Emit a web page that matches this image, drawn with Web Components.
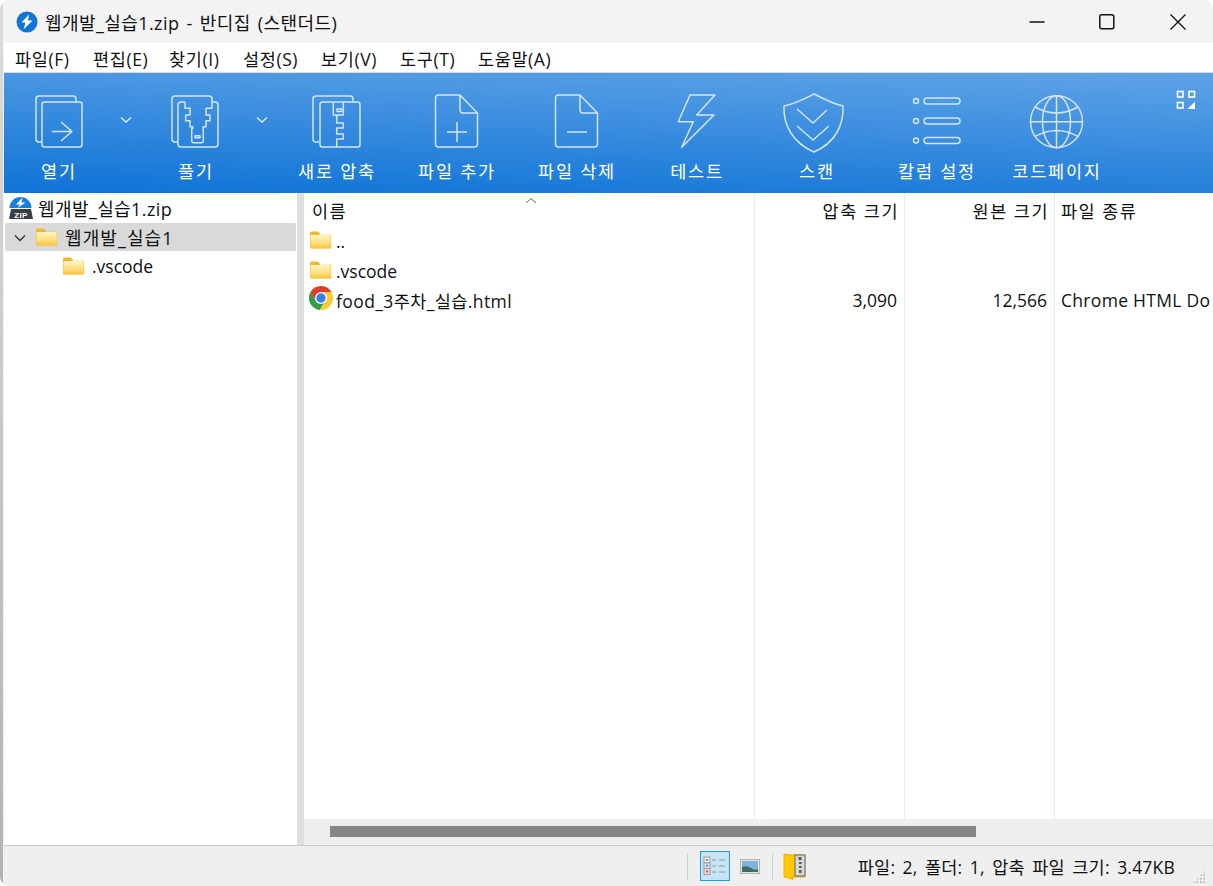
<!DOCTYPE html>
<html lang="ko"><head><meta charset="utf-8"><title>반디집</title>
<style>
html,body{margin:0;height:100%;background:#fff;overflow:hidden}
body{font-family:"Open Sans","Noto Sans CJK KR",sans-serif;color:#111}
</style></head><body>
<bz-window>
  <bz-titlebar slot="title">웹개발_실습1.zip - 반디집 (스탠더드)</bz-titlebar>
  <bz-menubar>
    <bz-menu w="78">파일(F)</bz-menu><bz-menu w="76">편집(E)</bz-menu><bz-menu w="74">찾기(I)</bz-menu><bz-menu w="78">설정(S)</bz-menu><bz-menu w="79">보기(V)</bz-menu><bz-menu w="78">도구(T)</bz-menu><bz-menu w="80">도움말(A)</bz-menu>
  </bz-menubar>
  <bz-toolbar>
    <bz-tool icon="open" w="108">열기</bz-tool><bz-drop l="6" r="2"></bz-drop>
    <bz-tool icon="extract" w="118">풀기</bz-tool><bz-drop l="0" r="6"></bz-drop>
    <bz-tool icon="newzip" w="120">새로 압축</bz-tool>
    <bz-tool icon="add" w="120">파일 추가</bz-tool>
    <bz-tool icon="del" w="120">파일 삭제</bz-tool>
    <bz-tool icon="test" w="120">테스트</bz-tool>
    <bz-tool icon="scan" w="120">스캔</bz-tool>
    <bz-tool icon="cols" w="120">칼럼 설정</bz-tool>
    <bz-tool icon="globe" w="120">코드페이지</bz-tool>
    <bz-icon name="grid" style="width:20px;height:20px;margin:17px 0 0 60px;flex:none"></bz-icon>
  </bz-toolbar>
  <bz-main>
    <bz-tree>
      <bz-tree-row icon="zip" indent="4">웹개발_실습1.zip</bz-tree-row>
      <bz-tree-row icon="folder" indent="31" open selected style="letter-spacing:1.100px">웹개발_실습1</bz-tree-row>
      <bz-tree-row icon="folder" indent="58" style="font-size:17.500px;letter-spacing:0;padding-top:2px">.vscode</bz-tree-row>
    </bz-tree>
    <bz-list>
      <bz-row icon="folder" style="height:30px">..</bz-row>
      <bz-row icon="folder" nm="0">.vscode</bz-row>
      <bz-row icon="chrome" nm=".4" packed="3,090" size="12,566" kind="Chrome HTML Do" style="height:29px">food_3주차_실습.html</bz-row>
    </bz-list>
  </bz-main>
  <bz-status>파일: 2, 폴더: 1, 압축 파일 크기: 3.47KB</bz-status>
</bz-window>
<script>
const folder=`<defs><linearGradient id="fg" x1="0" y1="0" x2="0" y2="1"><stop offset="0" stop-color="#fff3c0"/><stop offset=".6" stop-color="#ffdf80"/><stop offset="1" stop-color="#fcc437"/></linearGradient></defs>
<path d="M0 2.200Q0 .5 1.600 .5H8l2.200 2.200V6H0Z" fill="#f6b52a"/><path d="M0 4H22.200V18.600H1.400Q0 18.600 0 17.200Z" fill="#f6bc38"/><rect x=".5" y="4.300" width="21.200" height="13.800" rx=".6" fill="url(#fg)"/>`;
const docPath=`<path d="M51.500 21V52a3 3 0 0 1-3 3H12.500a3 3 0 0 1-3-3V6a3 3 0 0 1 3-3H34L51.500 21H37a3 3 0 0 1-3-3V3"/>`;
const ICONS={
 open:[60,60,`<g class="s"><path d="M14 50H11a3 3 0 0 1-3-3V7a3 3 0 0 1 3-3H45a3 3 0 0 1 3 3v3"/><rect x="14" y="10" width="40" height="45" rx="2.500"/><path d="M24 39.500H44M33 30L44 39.500L33 49"/></g>`],
 extract:[60,60,`<g class="s"><path d="M13 50H10a3 3 0 0 1-3-3V7a3 3 0 0 1 3-3H44a3 3 0 0 1 3 3v3"/><path d="M20 10H16a3 3 0 0 0-3 3V52a3 3 0 0 0 3 3H50a3 3 0 0 0 3-3V13a3 3 0 0 0-3-3H47"/><path d="M20 10V16.300H25V23H20.700V28.700H25V34.700H28M47 10V16.300H41V23H45V28.700H41V34.700H38"/><path d="M28 34.700V36.300H26.700V48.700Q26.700 50.700 28.700 50.700H36.300Q38.300 50.700 38.300 48.700V36.300H38V34.700"/><rect x="30" y="43.700" width="5" height="2"/></g>`],
 newzip:[60,60,`<g class="s"><path d="M13 50H10a3 3 0 0 1-3-3V7a3 3 0 0 1 3-3H44a3 3 0 0 1 3 3v3"/><rect x="14" y="10" width="40" height="45" rx="2.500"/><path d="M27.300 10V23H37.300V10"/><rect x="31" y="17" width="4.500" height="2.500"/><path d="M30.700 23V31H37.300V36H30.700V42H37.300V47H30.700V55"/></g>`],
 add:[60,60,`<g class="s">${docPath}<path d="M21 40H41M31 30V50"/></g>`],
 del:[60,60,`<g class="s">${docPath}<path d="M21 40H41"/></g>`],
 test:[60,60,`<g class="s"><path d="M24 3H49L30.700 23H48L15.700 55.300L27.300 29.700H12.300Z"/></g>`],
 scan:[60,60,`<g class="s"><path d="M28 2C36 6 47 12 57 14C58 33 49 51 28 60C7 51-3 33-2 14C9 12 20 6 28 2Z"/><path d="M11 17L27 31L41 18M11 34L27 48L43 34"/></g>`],
 cols:[60,60,`<g class="s"><circle cx="10" cy="9" r="2.500"/><circle cx="10" cy="29" r="2.500"/><circle cx="10" cy="48.500" r="2.500"/><rect x="18" y="6" width="36" height="6" rx="3"/><rect x="18" y="26" width="36" height="6" rx="3"/><rect x="18" y="45.500" width="36" height="6" rx="3"/></g>`],
 globe:[60,60,`<g class="s"><circle cx="30.500" cy="29.700" r="26"/><ellipse cx="30.500" cy="29.700" rx="14" ry="26"/><path d="M30.500 3.700V55.700M4.500 29.700H56.500M9 15Q30.500 27 52 15M9 44.400Q30.500 32.400 52 44.400"/></g>`],
 grid:[20,20,`<g fill="none" stroke="#fff" stroke-width="1.600"><rect x="1.500" y="1.500" width="5.500" height="5.500"/><rect x="13" y="1.500" width="5.500" height="5.500"/><rect x="1.500" y="12.500" width="5.500" height="5.500"/></g><path d="M11.500 19H19V11.500Z" fill="#fff"/>`],
 chev:[16,16,`<path d="M3 5.500L8 10L13 5.500" fill="none" stroke="#dcebfa" stroke-width="1.500"/>`],
 folder:[23,19,folder],
 zip:[26,26,`<path d="M1.500 13a11 11 0 0 1 22 0Z" fill="#1a7fdc"/><path d="M14.500 2.500L8 9.500H12L9.500 13L17.500 7.500H13.500Z" fill="#fff"/><path d="M3 14H23L25 24H1Z" fill="#3a3f46"/><text x="13" y="22.500" text-anchor="middle" font-family="Liberation Sans" font-weight="700" font-size="8" fill="#fff">ZIP</text>`],
 chrome:[24,24,`<circle cx="12" cy="12" r="12" fill="#fcc934"/><path d="M12 0A12 12 0 0 0 1.600 6L6.800 15L12 6H22.400A12 12 0 0 0 12 0Z" fill="#e33b2e"/><path d="M1.600 6A12 12 0 0 0 10.500 23.900L16 15L6.800 15Z" fill="#2f9e4f" /><circle cx="12" cy="12" r="6" fill="#fff"/><circle cx="12" cy="12" r="4.700" fill="#3b7de8"/>`],
 details:[27,27,`<rect x="3" y="5" width="6" height="6" fill="#f4f4f4" stroke="#9a9a9a"/><rect x="3" y="11" width="6" height="5.500" fill="#dbe6ff" stroke="#9a9a9a"/><rect x="3" y="16.500" width="6" height="6" fill="#f7dada" stroke="#9a9a9a"/><rect x="5" y="7" width="2" height="2" fill="#888"/><rect x="5" y="12.700" width="2" height="2" fill="#6c8ef0"/><rect x="5" y="18.500" width="2" height="2" fill="#e04848"/><path d="M11 8H15M18 8H24M11 14H15M18 14H24M11 20H15M18 20H24" stroke="#999" stroke-width="1"/>`],
 image:[20,15,`<rect x=".5" y=".5" width="19" height="14" fill="#e4e4e4" stroke="#b4b4b4"/><rect x="2" y="2" width="16" height="11" fill="#7fb2dc"/><path d="M2 8Q7 6 11 9T18 10V13H2Z" fill="#3f6d5c"/>`],
 zipfolder:[25,27,`<path d="M1 1H18V24H1Z" fill="#ffd400"/><path d="M18 2H22V24H10V26.500L1 24V1L10 3Z" fill="#ffc800" stroke="#f0a800" stroke-width=".8"/><rect x="12" y="2" width="10" height="21" fill="#d8d8d8" stroke="#666"/><path d="M15.500 4H18.500V7H15.500ZM16 9H18.500V11H16ZM16 13H18.500V15H16ZM16 17H18.500V20H16Z" fill="#555"/>`]
};
let uid=0;
class BzIcon extends HTMLElement{
  static get observedAttributes(){return["name"]}
  constructor(){super();this.attachShadow({mode:"open"}).innerHTML=`<style>:host{display:inline-block;line-height:0}svg{width:100%;height:100%;overflow:visible;display:block}.s{fill:none;stroke:#d3e5f8;stroke-width:1.500;stroke-linejoin:round}</style><div style="width:100%;height:100%"></div>`}
  attributeChangedCallback(a,o,n){
    const [w,h,b]=ICONS[n];const id="g"+(++uid);
    this.shadowRoot.querySelector("div").innerHTML=`<svg viewBox="0 0 ${w} ${h}">${b.replace(/"fg"/g,`"${id}"`).replace(/#fg/g,"#"+id)}</svg>`;
  }
}
customElements.define("bz-icon",BzIcon);
const define=(n,css,html,init)=>customElements.define(n,class extends HTMLElement{
  constructor(){super();this.attachShadow({mode:"open"}).innerHTML=`<style>${css}</style>${html}`}
  connectedCallback(){init&&init.call(this,this.shadowRoot)}
});
define("bz-window",`:host{display:flex;flex-direction:column;height:886px;box-sizing:border-box;padding-left:4px;border-radius:9px 9px 0 9px;overflow:hidden;background:linear-gradient(#dcdcdc,#b2b2b2) 0 0/3px 100% no-repeat,#f2f2f2}`,`<slot name="title"></slot><slot></slot>`);
define("bz-titlebar",`:host{display:flex;align-items:center;height:43px;flex:none;background:#f3f3f3;font-size:18px;color:#111}
.app{width:22px;height:22px;margin:0 7px 0 12px;flex:none}.t{flex:1;word-spacing:2px;letter-spacing:.42px;white-space:nowrap}.b{display:flex}.b svg{width:46px;height:16px;display:block}`,
`<svg class="app" viewBox="0 0 22 22"><circle cx="11" cy="11" r="10.500" fill="#1175d8"/><path d="M13 3.500L5.500 11.500H9.500L7.500 18.500L16.500 9.500H12Z" fill="#fff"/></svg><span class="t"><slot></slot></span>
<span class="b"><svg viewBox="0 0 46 16"><path d="M15.500 8H30.500" stroke="#111" stroke-width="1.300"/></svg><svg viewBox="0 0 46 16" style="margin-left:24px"><rect x="15.800" y=".8" width="14" height="14" rx="2" fill="none" stroke="#111" stroke-width="1.500"/></svg><svg viewBox="0 0 46 16" style="margin:0 12px 0 25px"><path d="M15.500 .5L30.500 15.500M30.500 .5L15.500 15.500" stroke="#111" stroke-width="1.300"/></svg></span>`);
define("bz-menubar",`:host{display:flex;height:30px;box-sizing:border-box;flex:none;padding:1px 0 0 11px;background:#fff;border-bottom:1px solid #dcdcdc;align-items:center;font-size:17.500px;letter-spacing:.6px}`,`<slot></slot>`);
define("bz-menu",`:host{display:block;white-space:nowrap}`,`<slot></slot>`,function(){this.style.width=this.getAttribute("w")+"px"});
define("bz-toolbar",`:host{display:flex;height:120px;flex:none;background:linear-gradient(182deg,#5fa3e6,#0f73d6);color:#fff}`,`<slot></slot>`);
define("bz-tool",`:host{display:flex;flex-direction:column;align-items:center;flex:none;padding-top:19px;box-sizing:border-box;font-size:17.500px;letter-spacing:1.800px;white-space:nowrap}
bz-icon{width:60px;height:60px}.l{margin-top:7px;line-height:24px;padding-left:2px}`,`<bz-icon></bz-icon><span class="l"><slot></slot></span>`,function(r){
  this.style.width=this.getAttribute("w")+"px";
  r.querySelector("bz-icon").setAttribute("name",this.getAttribute("icon"));
});
define("bz-drop",`:host{display:block;width:16px;flex:none;padding-top:39px}bz-icon{width:16px;height:16px;display:block}`,`<bz-icon name="chev"></bz-icon>`,function(){
  this.style.marginLeft=this.getAttribute("l")+"px";this.style.marginRight=this.getAttribute("r")+"px";
});
define("bz-main",`:host{display:flex;flex:1;min-height:0;background:#fff}`,`<slot></slot>`);
define("bz-tree",`:host{display:block;flex:none;padding:1px 1px 0 1px;box-sizing:border-box;border-right:7px solid #dedede;width:300px}`,`<slot></slot>`);
define("bz-tree-row",`:host{display:flex;align-items:center;height:28.500px;box-sizing:border-box;font-size:18px;letter-spacing:.4px;border-radius:2px;position:relative;white-space:nowrap}
:host([selected]){background:#d9d9d9}.c{position:absolute;left:7px;top:7px;width:16px;height:16px}.c[hidden]{display:none}.i{width:22px;height:18px;margin:0 7px 0 0;flex:none}.i.z{width:26px;height:26px;margin:0 4px 0 -1px}`,
`<svg class="c" viewBox="0 0 16 16" hidden><path d="M3 5.500L8 10.500L13 5.500" fill="none" stroke="#333" stroke-width="1.300"/></svg><bz-icon class="i"></bz-icon><span><slot></slot></span>`,function(r){
  this.style.paddingLeft=this.getAttribute("indent")+"px";
  const i=r.querySelector(".i");i.setAttribute("name",this.getAttribute("icon"));
  if(this.hasAttribute("open"))r.querySelector(".c").removeAttribute("hidden");
  if(this.getAttribute("icon")=="zip")i.classList.add("z");
});
define("bz-list",`:host{display:flex;flex-direction:column;flex:1;min-width:0;overflow:hidden}
.body{flex:1;min-height:0;background:linear-gradient(#e4eef8,#e4eef8) 450px 0/1px 100% no-repeat,linear-gradient(#e4eef8,#e4eef8) 600px 0/1px 100% no-repeat,linear-gradient(#e4eef8,#e4eef8) 750px 0/1px 100% no-repeat}
.h{display:grid;grid-template-columns:450px 150px 150px 1fr;height:33px;box-sizing:border-box;padding-top:2px;align-items:center;font-size:17.500px;position:relative;letter-spacing:1.500px}
.h span:nth-child(1){padding-left:8px}.h span:nth-child(2),.h span:nth-child(3){text-align:right;padding-right:5px}.h span:nth-child(4){padding-left:7px}
.sort{position:absolute;left:221px;top:4px;width:12px;height:7px}
.bar{height:26px;flex:none;background:#efefef;padding:7px 0 8px 26px;box-sizing:border-box}.th{display:block;width:646px;height:11px;background:#868686}`,
`<div class="body"><div class="h"><span>이름</span><span>압축 크기</span><span>원본 크기</span><span>파일 종류</span><svg class="sort" viewBox="0 0 12 7"><path d="M1 6L6 1.500L11 6" fill="none" stroke="#666"/></svg></div><slot></slot></div><div class="bar"><span class="th"></span></div>`);
define("bz-row",`:host{display:grid;grid-template-columns:450px 150px 150px 1fr;height:29.500px;align-items:center;font-size:17.500px;white-space:nowrap;overflow:hidden}
.n{display:flex;align-items:center;padding-left:6px}.i{width:22px;height:18px;margin:-2px 4px 0 0}.i.ch{width:24px;height:24px;margin:-4px 3px 0 -1px}
.r{text-align:right;padding-right:7px}.k{padding-left:7px;overflow:hidden;letter-spacing:.3px}`,
`<div class="n"><bz-icon class="i"></bz-icon><span><slot></slot></span></div><div class="r p"></div><div class="r s"></div><div class="k"></div>`,function(r){
  const i=r.querySelector(".i");i.setAttribute("name",this.getAttribute("icon"));
  if(this.hasAttribute("nm"))r.querySelector(".n").style.letterSpacing=this.getAttribute("nm")+"px";
  r.querySelector(".p").textContent=this.getAttribute("packed")||"";
  r.querySelector(".s").textContent=this.getAttribute("size")||"";
  r.querySelector(".k").textContent=this.getAttribute("kind")||"";
  if(this.getAttribute("icon")=="chrome")i.classList.add("ch");
});
define("bz-status",`:host{display:flex;height:41px;flex:none;box-sizing:border-box;background:#efefef;border-top:1px solid #c9c9c9;align-items:center;justify-content:flex-end;font-size:17.500px;letter-spacing:.2px;word-spacing:2.700px;white-space:nowrap;position:relative}
.sep{width:1px;height:27px;background:#cfcfcf}.sel{width:30px;height:30px;box-sizing:border-box;background:#c5e4f6;border:1.500px solid #1b9ce2;margin:0 10px 0 12px;display:block}
.sel bz-icon{width:27px;height:27px;display:block}.img{width:20px;height:15px;margin-right:12px}.zf{width:25px;height:27px;margin:0 50px 0 10px}.t{margin-right:38px}
.grip{position:absolute;right:7px;bottom:2px;width:14px;height:14px;background:radial-gradient(circle,#b5b5b5 1px,transparent 1.200px) 0 0/3.500px 3.500px;clip-path:polygon(100% 0,100% 100%,0 100%)}`,
`<span class="sep"></span><span class="sel"><bz-icon name="details"></bz-icon></span><bz-icon class="img" name="image"></bz-icon><span class="sep"></span><bz-icon class="zf" name="zipfolder"></bz-icon><span class="t"><slot></slot></span><span class="grip"></span>`);
</script>
</body></html>
